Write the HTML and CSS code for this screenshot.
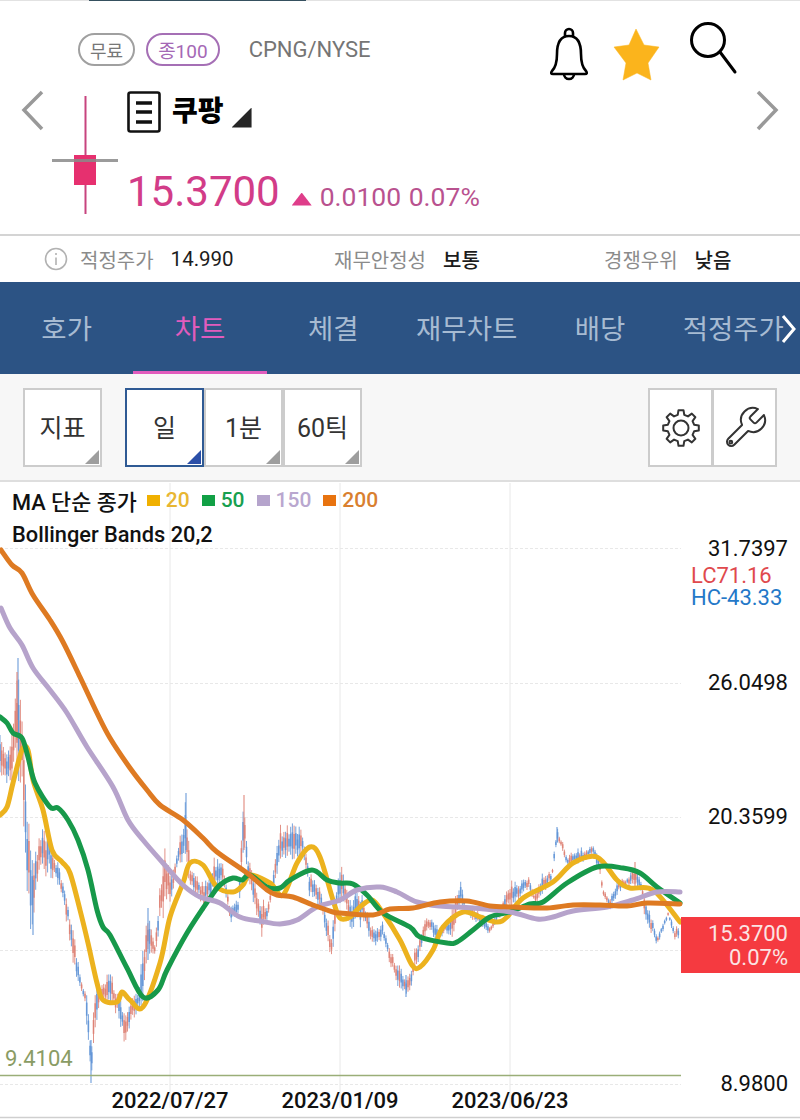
FILE: index.html
```html
<!DOCTYPE html>
<html lang="ko">
  <head>
    <meta charset="UTF-8" />
    <meta name="viewport" content="width=device-width, initial-scale=1.0" />
    <title>쿠팡 차트</title>
    <link rel="stylesheet" href="styles.css">
  </head>
  <body>
    <div class="status-line"><span></span></div>

    <header class="quote">
      <div class="quote-top">
        <span class="tag">무료</span>
        <span class="tag tag-purple">종100</span>
        <span class="symbol">CPNG/NYSE</span>
        <svg class="icon-bell" width="40" height="56" viewBox="0 0 40 56">
          <path d="M20 9C11 9 8 17 8 27C8 37 6 41 3 44Q1 47 4 47H36Q39 47 37 44C34 41 32 37 32 27C32 17 29 9 20 9Z" />
          <path d="M16 10V6a4 4 0 0 1 8 0V10" />
          <path d="M15 47a5 5 0 0 0 10 0" />
        </svg>
        <svg class="icon-star" width="48" height="56" viewBox="0 0 48 56">
          <polygon points="23,2 31,18 46,20 35,36 38,53 24,46 10,53 13,36 1,20 16,18" />
        </svg>
        <svg class="icon-search" width="50" height="58" viewBox="0 0 50 58">
          <circle cx="18" cy="20" r="16.5" />
          <path d="M30 32L45 52" />
        </svg>
      </div>

      <div class="quote-main">
        <svg class="arrow arrow-left" width="24" height="42" viewBox="0 0 24 42">
          <path d="M21 2L3 20L21 39" />
        </svg>
        <svg class="candle" width="66" height="120" viewBox="0 0 66 120">
          <rect class="candle-wick" x="32.5" y="0" width="2" height="118" />
          <rect class="candle-body" x="22" y="59" width="22" height="30" />
          <rect class="candle-cross" x="0" y="63" width="66" height="3" />
        </svg>
        <div class="quote-info">
          <div class="name-row">
            <svg class="icon-doc" width="34" height="42" viewBox="0 0 34 42">
              <rect x="1.5" y="1.5" width="31" height="39" rx="2" />
              <path class="doc-lines" d="M9 12H25M9 21H25M9 31H25" />
            </svg>
            <span class="name">쿠팡</span>
            <span class="name-mark"></span>
          </div>
          <div class="price-row">
            <span class="price">15.3700</span>
            <span class="up-mark"></span>
            <span class="change">0.0100 0.07%</span>
          </div>
        </div>
        <svg class="arrow arrow-right" width="24" height="42" viewBox="0 0 24 42">
          <path d="M3 2L21 20L3 39" />
        </svg>
      </div>
    </header>

    <section class="fair-row">
      <div class="fair-item">
        <svg class="icon-info" width="24" height="24" viewBox="0 0 24 24">
          <circle cx="12" cy="12" r="10.5" />
          <path d="M12 10.5V18M12 6V8" />
        </svg>
        <span class="fair-label">적정주가</span>
        <span class="fair-value fair-num">14.990</span>
      </div>
      <div class="fair-item">
        <span class="fair-label">재무안정성</span>
        <span class="fair-value">보통</span>
      </div>
      <div class="fair-item">
        <span class="fair-label">경쟁우위</span>
        <span class="fair-value">낮음</span>
      </div>
    </section>

    <nav class="tabs">
      <a class="tab">호가</a>
      <a class="tab active">차트</a>
      <a class="tab">체결</a>
      <a class="tab">재무차트</a>
      <a class="tab">배당</a>
      <a class="tab">적정주가</a>
      <svg class="tabs-more" width="16" height="30" viewBox="0 0 16 30">
        <path d="M2 2L13 15L2 28" />
      </svg>
    </nav>

    <section class="toolbar">
      <button class="tool-btn has-corner">지표</button>
      <div class="tool-group">
        <button class="tool-btn has-corner selected">일</button>
        <button class="tool-btn has-corner">1분</button>
        <button class="tool-btn has-corner">60틱</button>
      </div>
      <div class="tool-group tool-icons">
        <button class="tool-btn icon-btn">
          <svg width="42" height="42" viewBox="-21 -21 42 42">
            <polygon points="-3.27,-13.1 -2.5,-17.8 2.5,-17.8 3.27,-13.1 6.95,-11.57 10.83,-14.38 14.38,-10.83 11.57,-6.95 13.1,-3.27 17.8,-2.5 17.8,2.5 13.1,3.27 11.57,6.95 14.38,10.83 10.83,14.38 6.95,11.57 3.27,13.1 2.5,17.8 -2.5,17.8 -3.27,13.1 -6.95,11.57 -10.83,14.38 -14.38,10.83 -11.57,6.95 -13.1,3.27 -17.8,2.5 -17.8,-2.5 -13.1,-3.27 -11.57,-6.95 -14.38,-10.83 -10.83,-14.38 -6.95,-11.57" />
            <circle r="7.5" />
          </svg>
        </button>
        <button class="tool-btn icon-btn wrench-btn">
          <svg width="48" height="48" viewBox="0 0 24 24">
            <path d="M14.7 6.3a1 1 0 0 0 0 1.4l1.6 1.6a1 1 0 0 0 1.4 0l3.77-3.77a6 6 0 0 1-7.94 7.94l-6.91 6.91a2.12 2.12 0 0 1-3-3l6.91-6.91a6 6 0 0 1 7.94-7.94l-3.76 3.76z" />
            <circle cx="4.9" cy="19.1" r="0.7" />
          </svg>
        </button>
      </div>
    </section>

    <section class="chart">
      <div class="legend">
        <div class="legend-row">
          <span class="legend-title">MA 단순 종가</span>
          <span class="ma ma-20">20</span>
          <span class="ma ma-50">50</span>
          <span class="ma ma-150">150</span>
          <span class="ma ma-200">200</span>
        </div>
        <div class="legend-row">Bollinger Bands 20,2</div>
      </div>

      <svg class="plot" width="800" height="638" viewBox="0 482 800 638">
        <g class="grid">
          <path d="M170 483V1108M340 483V1108M510 483V1108" />
          <path class="grid-h" d="M0 548.5H681M0 683.5H681M0 817.5H681M0 950.5H681M0 1084.5H681" />
        </g>
        <g id="candles"></g>
        <path class="low-line" d="M0 1075.5H681" />

        <path class="line line-20" data-points="0,815 7,807 13,783 22,750 28,750 33,780 43,810 52,850 62,862 70,873 80,910 88,943 97,983 103,1000 117,1002 122,992 130,1000 143,1007 160,963 170,917 183,883 190,863 203,865 217,887 233,892 243,885 250,875 270,883 283,895 297,863 310,847 320,857 333,900 340,918 350,917 360,907 372,900 383,913 400,940 412,965 420,967 433,950 443,927 463,912 480,917 497,922 507,917 523,898 553,882 573,863 597,857 617,880 630,888 653,890 680,922" />
        <path class="line line-50" data-points="0,717 7,723 13,733 22,738 28,757 35,783 50,807 58,808 68,820 78,840 88,870 97,910 103,927 110,935 127,968 143,997 158,990 167,970 187,933 210,898 220,885 233,878 242,880 250,875 267,887 280,888 290,880 312,870 327,880 340,883 353,884 367,895 383,913 410,927 420,937 447,943 457,942 473,930 490,917 510,912 530,904 543,902 567,883 597,867 623,868 640,873 657,887 680,903" />
        <path class="line line-150" data-points="1,608 10,628 22,645 33,668 50,690 67,713 87,747 113,787 128,820 143,840 163,863 183,885 200,897 220,903 240,917 260,921 280,924 297,920 317,907 340,900 357,890 380,887 397,892 417,902 440,906 473,908 510,912 537,919 553,917 573,911 607,907 633,900 657,892 680,892" />
        <path class="line line-200" data-points="1,550 12,565 22,573 33,595 50,620 63,642 80,677 97,713 110,738 130,768 147,790 160,805 183,820 203,838 217,852 247,873 267,890 277,895 293,897 313,905 333,912 340,913 373,915 390,909 413,908 440,902 467,901 490,906 513,907 547,908 573,905 600,905 627,906 647,903 680,904" />

        <text class="val-low" x="5" y="1066">9.4104</text>
        <text class="axis-y" x="788" y="556">31.7397</text>
        <text class="lc" x="691" y="583">LC71.16</text>
        <text class="hc" x="691" y="605">HC-43.33</text>
        <text class="axis-y" x="788" y="690">26.0498</text>
        <text class="axis-y" x="788" y="824">20.3599</text>
        <text class="axis-y" x="788" y="1091">8.9800</text>
        <text class="axis-x" x="170" y="1108">2022/07/27</text>
        <text class="axis-x" x="340" y="1108">2023/01/09</text>
        <text class="axis-x" x="510" y="1108">2023/06/23</text>

        <rect class="last-box" x="681" y="917" width="119" height="56" />
        <text class="last-text" x="788" y="941">15.3700</text>
        <text class="last-text" x="788" y="965">0.07%</text>

        <path class="bottom-line" d="M0 1117.5H800" />
      </svg>
    </section>

    <script src="chart.js"></script>
  </body>
</html>
```

FILE: styles.css
```css
* {
  box-sizing: border-box;
}
body {
  font-family: Roboto, "Noto Sans CJK KR", sans-serif;
  margin: 0;
  width: 800px;
  height: 1120px;
  overflow: hidden;
  background-color: #ffffff;
  color: #111111;
}
.status-line {
  height: 1px;
  background-color: #e2e2e2;
}
.status-line span {
  display: block;
  width: 217px;
  height: 1px;
  margin-left: 89px;
  background-color: #35505f;
}

/* quote header */
.quote {
  height: 235px;
  border-bottom: 2px solid #d4d4d4;
}
.quote-top {
  height: 91px;
  display: flex;
  align-items: flex-start;
  padding: 32px 0 0 78px;
}
.tag {
  height: 33px;
  padding: 0 10px;
  display: flex;
  align-items: center;
  border: 2px solid #a0a0a0;
  border-radius: 17px;
  font-size: 18px;
  color: #777777;
  margin-right: 11px;
}
.tag-purple {
  border-color: #a56fb5;
  color: #a568b5;
  font-size: 19px;
  margin-right: 29px;
}
.symbol {
  font-size: 22px;
  line-height: 33px;
  color: #757575;
  margin-right: 178px;
}
.icon-bell {
  margin-top: -6px;
  fill: none;
  stroke: #000000;
  stroke-width: 2.6;
  margin-right: 24px;
}
.icon-star {
  margin-top: -6px;
  fill: #fbb41c;
  stroke: #fbb41c;
  stroke-width: 0.5;
  stroke-linejoin: round;
  margin-right: 29px;
}
.icon-search {
  margin-top: -13px;
  fill: none;
  stroke: #000000;
  stroke-width: 3;
  stroke-linecap: round;
}
.quote-main {
  display: flex;
  align-items: flex-start;
}
.arrow {
  margin-top: -2px;
  fill: none;
  stroke: #999999;
  stroke-width: 3.5;
}
.arrow-left {
  margin-left: 21px;
}
.arrow-right {
  margin-left: auto;
  margin-right: 21px;
}
.candle {
  margin: 4px 0 0 7px;
}
.candle-wick {
  fill: #c7447f;
}
.candle-body {
  fill: #e6306f;
}
.candle-cross {
  fill: #8a8a8a;
  fill-opacity: 0.85;
}
.quote-info {
  margin-left: 9px;
}
.name-row {
  display: flex;
  align-items: center;
  height: 42px;
  margin-top: -1px;
}
.icon-doc {
  fill: none;
  stroke: #111111;
  stroke-width: 2.6;
}
.doc-lines {
  stroke-width: 3.4;
}
.name {
  font-size: 28px;
  font-weight: 900;
  color: #000000;
  margin: -7px 0 0 11px;
}
.name-mark {
  width: 20px;
  height: 20px;
  margin: 11px 0 0 8px;
  background-color: #262626;
  clip-path: polygon(100% 0, 100% 100%, 0 100%);
}
.price-row {
  display: flex;
  align-items: center;
  height: 48px;
  margin-top: 34px;
  color: #d23c88;
}
.price {
  font-size: 42px;
}
.up-mark {
  width: 20px;
  height: 13px;
  margin: 16px 0 0 12px;
  background-color: #df3d8a;
  clip-path: polygon(50% 0, 100% 100%, 0 100%);
}
.change {
  font-size: 26.5px;
  word-spacing: 1px;
  margin: 11px 0 0 8px;
  color: #b9528f;
}

/* fair value row */
.fair-row {
  height: 46px;
  display: grid;
  grid-template-columns: 290px 270px 1fr;
  align-items: center;
  padding-left: 44px;
}
.fair-item {
  display: flex;
  align-items: center;
  font-size: 20px;
}
.icon-info {
  fill: none;
  stroke: #b2b2b2;
  stroke-width: 1.6;
  margin-right: 12px;
}
.fair-label {
  color: #8b8b8b;
  margin-right: 17px;
}
.fair-value {
  color: #1c1c1c;
  font-weight: 500;
}
.fair-num {
  font-size: 20.5px;
  font-weight: 400;
}

/* tabs */
.tabs {
  height: 92px;
  display: flex;
  position: relative;
  background-color: #2c5384;
}
.tab {
  flex: 1;
  display: flex;
  align-items: center;
  justify-content: center;
  font-size: 27.5px;
  color: #a7bbd2;
  border-bottom: 3px solid transparent;
}
.tab.active {
  color: #e15cbd;
  border-bottom-color: #e15cbd;
}
.tabs-more {
  position: absolute;
  right: 3px;
  top: 32px;
  fill: none;
  stroke: #ffffff;
  stroke-width: 3;
}

/* toolbar */
.toolbar {
  height: 108px;
  display: flex;
  padding: 14px 23px 0;
  background-color: #f7f7f7;
  border-bottom: 2px solid #dedede;
}
.tool-group {
  display: flex;
  margin-left: 23px;
}
.tool-icons {
  margin-left: auto;
}
.tool-btn {
  position: relative;
  width: 79px;
  height: 79px;
  padding: 0 0 3px;
  border: 2px solid #cccccc;
  background-color: #ffffff;
  font-family: inherit;
  font-size: 25px;
  color: #333333;
}
.has-corner::after {
  content: "";
  position: absolute;
  right: 1px;
  bottom: 1px;
  width: 14px;
  height: 14px;
  background-color: #9e9e9e;
  clip-path: polygon(100% 0, 100% 100%, 0 100%);
}
.tool-btn.selected {
  border-color: #2f5a94;
}
.tool-btn.selected::after {
  background-color: #2b4fa8;
}
.icon-btn {
  width: 65px;
  padding: 0;
  display: flex;
  align-items: center;
  justify-content: center;
}
.icon-btn svg {
  fill: none;
  stroke: #333333;
  stroke-width: 2;
  stroke-linejoin: round;
}
.wrench-btn {
  margin-left: -1px;
}
.wrench-btn svg {
  stroke-width: 1;
}

/* chart */
.chart {
  position: relative;
  height: 638px;
}
.plot {
  display: block;
}
.legend {
  position: absolute;
  left: 12px;
  top: 0;
  font-size: 21.8px;
  font-weight: 500;
}
.legend-row {
  height: 34px;
  display: flex;
  align-items: center;
}
.legend-row:first-child {
  margin-top: 1px;
}
.legend-title {
  margin-right: 10px;
}
.ma {
  display: flex;
  align-items: center;
  font-size: 21px;
  margin-right: 12px;
}
.ma::before {
  content: "";
  width: 13px;
  height: 11px;
  margin-right: 6px;
}
.ma-20 {
  color: #e8b632;
}
.ma-20::before {
  background-color: #f0b000;
}
.ma-50 {
  color: #17a050;
}
.ma-50::before {
  background-color: #11a045;
}
.ma-150 {
  color: #b9a7cf;
}
.ma-150::before {
  background-color: #b5a4cc;
}
.ma-200 {
  color: #d9802f;
}
.ma-200::before {
  background-color: #e8730f;
}
.grid path {
  fill: none;
  stroke: #e8e8e8;
  stroke-width: 1;
}
.grid .grid-h {
  stroke-dasharray: 3 2;
}
.low-line {
  stroke: #9aae78;
  stroke-width: 1.5;
}
.bottom-line {
  stroke: #cfcfcf;
  stroke-width: 1.5;
}
.line {
  fill: none;
  stroke-width: 5;
  stroke-linejoin: round;
  stroke-linecap: round;
}
.line-20 {
  stroke: #ecb21e;
}
.line-50 {
  stroke: #17994a;
}
.line-150 {
  stroke: #b6a3cb;
}
.line-200 {
  stroke: #de7a22;
}
.plot text {
  font-family: Roboto, sans-serif;
  font-size: 22px;
}
.axis-y {
  text-anchor: end;
  fill: #111111;
}
.axis-x {
  text-anchor: middle;
  fill: #111111;
  font-weight: 500;
}
.lc {
  fill: #e0494d;
}
.hc {
  fill: #2478c8;
}
.val-low {
  fill: #8a9c64;
}
.last-box {
  fill: #f53a40;
}
.last-text {
  text-anchor: end;
  fill: #fbe4e4;
}
```

FILE: chart.js
```js
// rough outline of the price bars: x, top of range, bottom of range
const ranges = [
  [0,735,790],[5,745,785],[10,735,790],[15,680,780],[18,658,785],[22,700,800],[25,760,860],[30,825,935],
  [33,860,935],[40,825,870],[47,825,880],[53,845,880],[60,870,890],[68,900,930],[72,920,960],[78,960,990],
  [85,990,1005],[88,990,1045],[91,1050,1083],[95,980,1050],[100,985,1000],[110,970,1010],[118,990,1015],
  [125,1015,1048],[130,1000,1030],[138,990,1010],[145,920,1000],[148,908,960],[155,940,960],[160,880,930],
  [165,845,920],[172,870,900],[178,845,860],[186,795,870],[190,860,890],[200,880,900],[205,875,915],
  [215,855,895],[222,860,880],[230,900,925],[238,900,915],[244,795,860],[247,850,880],[255,880,915],
  [262,895,943],[268,905,915],[280,820,870],[285,825,860],[295,820,860],[303,830,860],[310,870,900],
  [320,880,910],[328,920,950],[332,930,962],[337,880,910],[342,860,905],[350,900,930],[358,880,930],
  [365,905,925],[372,925,950],[383,920,940],[390,950,965],[397,960,985],[405,975,995],[410,970,995],
  [415,945,975],[425,920,940],[430,915,930],[437,925,945],[445,925,932],[452,910,940],[460,877,905],
  [466,905,915],[475,905,925],[483,915,930],[490,925,935],[498,910,920],[505,890,912],[512,880,905],
  [520,880,900],[528,875,890],[535,895,905],[543,870,895],[552,870,880],[557,827,842],[562,838,852],
  [567,855,868],[573,850,867],[582,847,863],[587,850,860],[594,842,857],[600,860,880],[603,888,897],
  [610,897,912],[618,880,893],[627,877,887],[635,862,887],[642,883,893],[645,897,923],[653,920,937],
  [657,935,945],[662,925,935],[668,910,917],[675,927,943],[678,925,940]
];

// single bars that stick out of the outline
const spikes = [
  [18,658,720,"#5f93d6"],[17,672,740,"#dd7f72"],[91,1040,1083,"#5f93d6"],[186,793,850,"#5f93d6"],
  [244,795,850,"#dd7f72"],[33,880,935,"#5f93d6"],[148,908,960,"#5f93d6"],[406,975,997,"#5f93d6"],
  [557,827,842,"#5f93d6"],[635,862,887,"#dd7f72"]
];

const svgNS = "http://www.w3.org/2000/svg";
const group = document.getElementById("candles");
let seed = 7;

function rand() {
  seed = (seed * 16807) % 2147483647;
  return seed / 2147483647;
}

function addBar(x, y1, y2, color, width) {
  const bar = document.createElementNS(svgNS, "line");
  bar.setAttribute("x1", x);
  bar.setAttribute("x2", x);
  bar.setAttribute("y1", y1);
  bar.setAttribute("y2", y2);
  bar.setAttribute("stroke", color);
  bar.setAttribute("stroke-width", width);
  bar.setAttribute("stroke-opacity", 0.85);
  group.appendChild(bar);
}

let i = 0;
for (let x = 0; x < 680; x += 1.7) {
  while (i < ranges.length - 2 && ranges[i + 1][0] < x) i++;
  const a = ranges[i];
  const b = ranges[i + 1];
  const t = Math.min(1, (x - a[0]) / (b[0] - a[0]));
  const top = a[1] + (b[1] - a[1]) * t;
  const bottom = a[2] + (b[2] - a[2]) * t;
  const h = bottom - top;
  const y1 = top + rand() * h * 0.35;
  const y2 = bottom - rand() * h * 0.35;
  const color = rand() > 0.5 ? "#dd7f72" : "#5f93d6";
  addBar(x, y1, y2, color, 1);
  addBar(x, y1 + (y2 - y1) * 0.25, y1 + (y2 - y1) * 0.7, color, 1.6);
}

spikes.forEach((s) => addBar(s[0], s[1], s[2], s[3], 1.2));

// moving averages: turn the sampled points into a smooth curve
document.querySelectorAll(".line").forEach((line) => {
  const pts = line.dataset.points.split(" ").map((p) => p.split(",").map(Number));
  let d = "M" + pts[0];
  for (let n = 0; n < pts.length - 1; n++) {
    const p0 = pts[n - 1] || pts[n];
    const p1 = pts[n];
    const p2 = pts[n + 1];
    const p3 = pts[n + 2] || p2;
    const c1 = [p1[0] + (p2[0] - p0[0]) / 6, p1[1] + (p2[1] - p0[1]) / 6];
    const c2 = [p2[0] - (p3[0] - p1[0]) / 6, p2[1] - (p3[1] - p1[1]) / 6];
    d += "C" + c1 + " " + c2 + " " + p2;
  }
  line.setAttribute("d", d);
});
```
